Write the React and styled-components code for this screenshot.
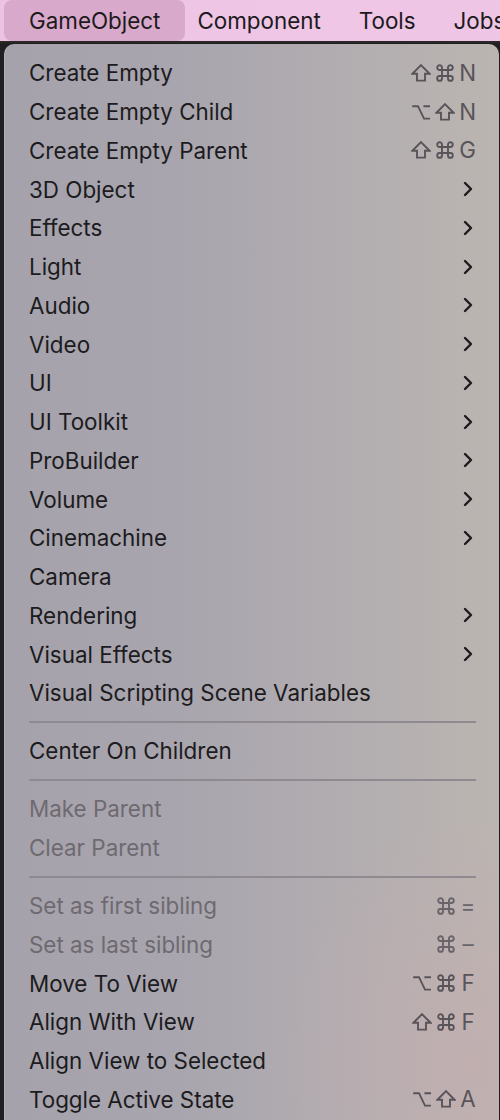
import React from "react";
import styled, { createGlobalStyle } from "styled-components";

const Global = createGlobalStyle`
  html, body { margin: 0; padding: 0; background: #1f1e20; }
  body { font-family: Inter, "Noto Sans", sans-serif; -webkit-font-smoothing: antialiased; }
`;

const Page = styled.div`
  width: 500px;
  height: 1120px;
  overflow: hidden;
  background: #1f1e20;
`;

const MenuBar = styled.div`
  height: 41px;
  background: linear-gradient(90deg, #edc3e3 0%, #efc6e6 60%, #eec5e5 100%);
  display: flex;
  align-items: stretch;
  padding-left: 4px;
  border-bottom: 2px solid #2b2729;
`;

const BarItem = styled.div`
  display: flex;
  align-items: center;
  padding: 0 ${(p) => (p.$active ? "25px" : "19px")};
  margin-right: ${(p) => (p.$active ? "-7px" : "0")};
  font-size: 22.4px;
  color: #1c1a1c;
  border-radius: 8px;
  background: ${(p) => (p.$active ? "#d9a9cb" : "transparent")};
  white-space: nowrap;
`;

const Panel = styled.div`
  margin: 1px 1px 0 4px;
  height: 1200px;
  border-radius: 10px;
  padding-top: 9.6px;
  box-sizing: border-box;
  background:
    radial-gradient(ellipse 60% 30% at 95% 85%, rgba(200, 170, 175, 0.5), rgba(200, 170, 175, 0) 70%),
    linear-gradient(90deg, #a5a2ab 0%, #a8a5ae 35%, #b1acb0 65%, #bbb5b1 100%);
  box-shadow: inset 1px 0 0 rgba(255, 255, 255, 0.15);
`;

const Row = styled.div`
  height: 38.75px;
  display: flex;
  align-items: center;
  padding: 0 23px 0 25px;
  font-size: 22.4px;
  color: ${(p) => (p.$disabled ? "#6e6a70" : "#1c1b1d")};
`;

const Label = styled.span`
  flex: 1;
  white-space: nowrap;
`;

const Shortcut = styled.span`
  display: flex;
  align-items: center;
  gap: 4px;
  color: ${(p) => (p.$disabled ? "#68646a" : "#58545a")};
`;

const KeyIcon = styled.svg`
  width: 20px;
  height: 20px;
  display: block;
`;

const KeyChar = styled.span`
  min-width: 16px;
  display: flex;
  justify-content: center;
  font-size: 22.4px;
  line-height: 1;
`;

const Separator = styled.div`
  height: 19.25px;
  display: flex;
  align-items: center;
  padding: 0 23px 0 25px;
  &::after {
    content: "";
    flex: 1;
    height: 2px;
    background: #8f8a8f;
  }
`;

const Chevron = () => (
  <svg width="12" height="16" viewBox="0 0 12 16" style={{ marginRight: "2px" }}>
    <path d="M3 2 L9 8 L3 14" fill="none" stroke="#1c1b1d" strokeWidth="2.4" strokeLinecap="round" strokeLinejoin="round" />
  </svg>
);

const glyphPaths = {
  shift: "M10 2.2 L18.6 10.8 H14 V17.6 H6 V10.8 H1.4 Z",
  cmd: "M7 7 V4.6 A2.4 2.4 0 1 0 4.6 7 H15.4 A2.4 2.4 0 1 0 13 4.6 V15.4 A2.4 2.4 0 1 0 15.4 13 H4.6 A2.4 2.4 0 1 0 7 15.4 Z",
  opt: "M1.2 4.2 H7 L13 16.6 H19 M12.4 4.2 H19",
};

const Glyph = ({ k }) => (
  <KeyIcon viewBox="0 0 20 20">
    <path d={glyphPaths[k]} fill="none" stroke="currentColor" strokeWidth="1.9" strokeLinejoin="miter" />
  </KeyIcon>
);

const items = [
  { t: "Create Empty", k: ["shift", "cmd", "N"] },
  { t: "Create Empty Child", k: ["opt", "shift", "N"] },
  { t: "Create Empty Parent", k: ["shift", "cmd", "G"] },
  { t: "3D Object", sub: true },
  { t: "Effects", sub: true },
  { t: "Light", sub: true },
  { t: "Audio", sub: true },
  { t: "Video", sub: true },
  { t: "UI", sub: true },
  { t: "UI Toolkit", sub: true },
  { t: "ProBuilder", sub: true },
  { t: "Volume", sub: true },
  { t: "Cinemachine", sub: true },
  { t: "Camera" },
  { t: "Rendering", sub: true },
  { t: "Visual Effects", sub: true },
  { t: "Visual Scripting Scene Variables" },
  { sep: true },
  { t: "Center On Children" },
  { sep: true },
  { t: "Make Parent", dis: true },
  { t: "Clear Parent", dis: true },
  { sep: true },
  { t: "Set as first sibling", dis: true, k: ["cmd", "="] },
  { t: "Set as last sibling", dis: true, k: ["cmd", "–"] },
  { t: "Move To View", k: ["opt", "cmd", "F"] },
  { t: "Align With View", k: ["shift", "cmd", "F"] },
  { t: "Align View to Selected" },
  { t: "Toggle Active State", k: ["opt", "shift", "A"] },
];

export default function App() {
  return (
    <Page>
      <Global />
      <MenuBar>
        <BarItem $active>GameObject</BarItem>
        <BarItem>Component</BarItem>
        <BarItem>Tools</BarItem>
        <BarItem>Jobs</BarItem>
      </MenuBar>
      <Panel>
        {items.map((it, i) =>
          it.sep ? (
            <Separator key={i} />
          ) : (
            <Row key={i} $disabled={it.dis}>
              <Label>{it.t}</Label>
              {it.k && (
                <Shortcut $disabled={it.dis}>
                  {it.k.map((k, j) =>
                    glyphPaths[k] ? <Glyph key={j} k={k} /> : <KeyChar key={j}>{k}</KeyChar>
                  )}
                </Shortcut>
              )}
              {it.sub && <Chevron />}
            </Row>
          )
        )}
      </Panel>
    </Page>
  );
}
